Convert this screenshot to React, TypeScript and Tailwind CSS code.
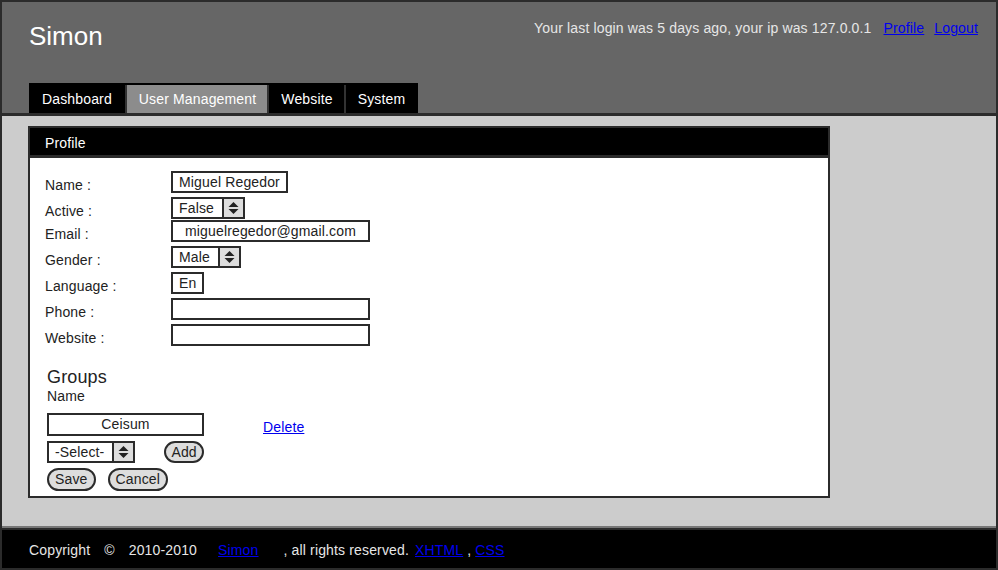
import React from 'react';

function Arrows() {
  return (
    <span className="flex w-[21px] items-center justify-center self-stretch border-l-2 border-[#2b2b2b] bg-[#dddddd]">
      <svg width="11" height="14" viewBox="0 0 11 14">
        <path d="M0.5 6 L5.5 1 L10.5 6 Z" fill="#222" />
        <path d="M0.5 8 L5.5 13 L10.5 8 Z" fill="#222" />
      </svg>
    </span>
  );
}

function Select({ value }: { value: string }) {
  return (
    <div className="flex h-[22px] border-2 border-[#2b2b2b] bg-white">
      <span className="pl-[6px] pr-[8px] leading-[18px]">{value}</span>
      <Arrows />
    </div>
  );
}

function Row({ label, h, children }: { label: string; h: string; children: React.ReactNode }) {
  return (
    <div className={`flex items-start ${h}`}>
      <div className="w-[126px] pt-[6px] leading-[16px]">{label}</div>
      {children}
    </div>
  );
}

const box = 'h-[22px] border-2 border-[#2b2b2b] bg-white leading-[18px]';
const pill = 'rounded-full border-2 border-[#2b2b2b] bg-[#dddddd]';

export default function App() {
  return (
    <div className="h-[570px] w-[998px] border-2 border-[#2b2b2b] font-['Liberation_Sans',Arial,sans-serif] text-[14px] tracking-[0.15px] text-[#222]">
      {/* Header */}
      <div className="flex h-[114px] flex-col border-b-[3px] border-[#2b2b2b] bg-[#666666]">
        <div className="flex items-start justify-between pl-[27px] pr-[18px] pt-[19px]">
          <div className="text-[26px] leading-[30px] tracking-normal text-white">Simon</div>
          <div className="-mt-[1px] leading-[16px] text-[#e6e6e6]">
            Your last login was 5 days ago, your ip was 127.0.0.1
            <a href="#" className="ml-[12px] text-[#0000ee] underline">Profile</a>
            <a href="#" className="ml-[10px] text-[#0000ee] underline">Logout</a>
          </div>
        </div>
        <div className="mt-auto ml-[27px] flex h-[30px] w-max bg-black pt-[2px] text-white">
          <div className="px-[13px] leading-[28px]">Dashboard</div>
          <div className="border-l-2 border-[#333] bg-[#8c8c8c] pl-[12px] pr-[11px] leading-[28px]">User Management</div>
          <div className="border-l-2 border-[#333] pl-[12px] pr-[11px] leading-[28px]">Website</div>
          <div className="border-l-2 border-[#333] pl-[12px] pr-[13px] leading-[28px]">System</div>
        </div>
      </div>

      {/* Content */}
      <div className="h-[412px] border-b-2 border-[#777] bg-[#cccccc] pl-[26px] pt-[10px]">
        <div className="h-[372px] w-[802px] border-2 border-[#2b2b2b] bg-white">
          <div className="h-[30px] border-b-[3px] border-[#2b2b2b] bg-black pl-[15px] pt-[7px] leading-[16px] text-white">
            Profile
          </div>
          <div className="pl-[15px] pt-[13px]">
            <Row label="Name :" h="h-[26px]">
              <div className={`${box} px-[6px]`}>Miguel Regedor</div>
            </Row>
            <Row label="Active :" h="h-[23px]">
              <Select value="False" />
            </Row>
            <Row label="Email :" h="h-[26px]">
              <div className={`${box} w-[199px] text-center`}>miguelregedor@gmail.com</div>
            </Row>
            <Row label="Gender :" h="h-[26px]">
              <Select value="Male" />
            </Row>
            <Row label="Language :" h="h-[26px]">
              <div className={`${box} px-[6px]`}>En</div>
            </Row>
            <Row label="Phone :" h="h-[26px]">
              <div className={`${box} w-[199px]`} />
            </Row>
            <Row label="Website :" h="h-[26px]">
              <div className={`${box} w-[199px]`} />
            </Row>

            <div className="ml-[2px] mt-[17px]">
              <div className="text-[18px] leading-[21px]">Groups</div>
              <div className="leading-[16px]">Name</div>
              <div className="mt-[9px] flex items-start">
                <div className="h-[23px] w-[157px] border-2 border-[#2b2b2b] bg-white text-center leading-[19px]">Ceisum</div>
                <a href="#" className="ml-[59px] pt-[6px] leading-[16px] text-[#0000ee] underline">Delete</a>
              </div>
              <div className="mt-[5px] flex items-start">
                <Select value="-Select-" />
                <button className={`${pill} ml-[29px] h-[22px] px-[5px] leading-[18px]`}>Add</button>
              </div>
              <div className="mt-[5px] flex items-start gap-[12px]">
                <button className={`${pill} h-[23px] px-[6px] leading-[19px]`}>Save</button>
                <button className={`${pill} h-[23px] px-[6px] leading-[19px]`}>Cancel</button>
              </div>
            </div>
          </div>
        </div>
      </div>

      {/* Footer */}
      <div className="flex h-[40px] items-center border-t-2 border-[#2b2b2b] bg-black pl-[27px] pt-[1px] leading-[16px] text-[#e6e6e6]">
        <span>Copyright</span>
        <span className="ml-[14px]">©</span>
        <span className="ml-[14px]">2010-2010</span>
        <a href="#" className="ml-[21px] text-[#0000ee] underline">Simon</a>
        <span className="ml-[25px]">, all rights reserved.</span>
        <a href="#" className="ml-[6px] text-[#0000ee] underline">XHTML</a>
        <span className="ml-[4px]">,</span>
        <a href="#" className="ml-[4px] text-[#0000ee] underline">CSS</a>
      </div>
    </div>
  );
}
